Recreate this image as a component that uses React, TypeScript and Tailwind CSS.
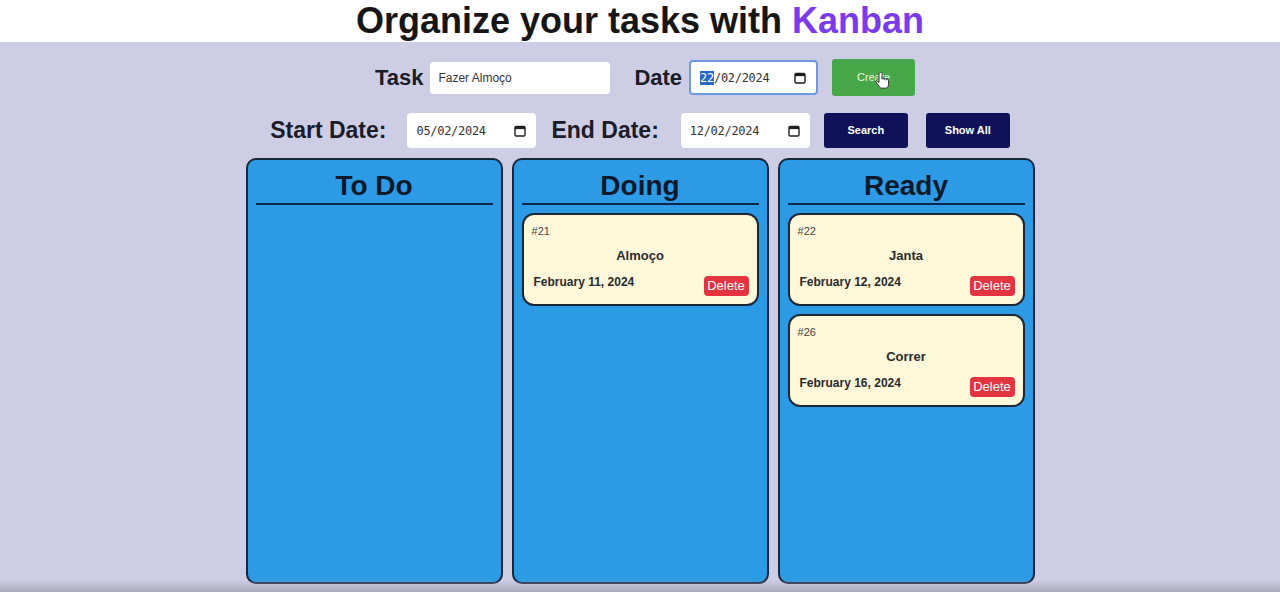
import React from "react";

type Task = { id: number; title: string; date: string };

const columns: { name: string; tasks: Task[] }[] = [
  { name: "To Do", tasks: [] },
  { name: "Doing", tasks: [{ id: 21, title: "Almoço", date: "February 11, 2024" }] },
  {
    name: "Ready",
    tasks: [
      { id: 22, title: "Janta", date: "February 12, 2024" },
      { id: 26, title: "Correr", date: "February 16, 2024" },
    ],
  },
];

function CalendarIcon() {
  return (
    <svg width="12" height="12" viewBox="0 0 12 12" className="shrink-0">
      <rect x="1" y="1.5" width="10" height="9.5" rx="1.2" fill="none" stroke="#1f1f1f" strokeWidth="1.4" />
      <rect x="1" y="1.5" width="10" height="2.6" fill="#1f1f1f" />
    </svg>
  );
}

// fake date input so the pt-BR format shows up like the screenshot
function DateField({ day, rest, focused }: { day: string; rest: string; focused?: boolean }) {
  return (
    <div
      className={
        "flex h-[35px] w-[129px] items-center justify-between rounded bg-white pl-[9px] pr-[10px] text-[12px] text-[#333] " +
        (focused ? "border-2 border-[#6d9be0]" : "")
      }
      style={{ fontFamily: '"DejaVu Sans Mono", "Liberation Mono", monospace' }}
    >
      <span className="tracking-[-0.3px]">
        {focused ? <span className="bg-[#2868c8] text-white">{day}</span> : day}
        {rest}
      </span>
      <CalendarIcon />
    </div>
  );
}

function Card({ task }: { task: Task }) {
  return (
    <div className="rounded-[12px] border-2 border-[#1c2733] bg-[#fdf8da] px-2 pt-[8px] pb-[8px]">
      <div className="text-[11px] leading-[16px] text-[#444]">#{task.id}</div>
      <div className="mt-[8px] text-center text-[13px] font-bold leading-[18px] text-[#2a2a2a]">{task.title}</div>
      <div className="mt-[11px] flex items-start justify-between">
        <span className="ml-[2px] -mt-[2px] text-[12px] font-bold leading-[16px] text-[#2a2a2a]">{task.date}</span>
        <button className="h-[20px] w-[45px] rounded-[4px] bg-[#e4343f] text-[13px] leading-[20px] text-white">
          Delete
        </button>
      </div>
    </div>
  );
}

export default function App() {
  return (
    <main
      className="relative h-[592px] overflow-hidden bg-[#cecde6]"
      style={{ fontFamily: '"Liberation Sans", Arial, sans-serif' }}
    >
      <header className="flex h-[42px] items-center justify-center bg-white">
        <h1 className="text-[36px] font-bold leading-none text-[#161616]">
          Organize your tasks with <span className="text-[#7c3aed]">Kanban</span>
        </h1>
      </header>

      {/* create form */}
      <div className="mt-[17px] flex h-[37px] items-center justify-center pl-[10px]">
        <label className="text-[22px] font-bold text-[#1b1b2a]">Task</label>
        <input
          defaultValue="Fazer Almoço"
          className="ml-[7px] h-[32px] w-[180px] rounded bg-white px-[8px] text-[12px] text-[#333] outline-none"
        />
        <label className="ml-[24px] text-[22px] font-bold text-[#1b1b2a]">Date</label>
        <div className="ml-[7px]">
          <DateField day="22" rest="/02/2024" focused />
        </div>
        <button className="relative ml-[14px] h-[37px] w-[83px] rounded-[3px] bg-[#47a84a] text-[11px] text-[#e6f5e6]">
          Create
          <svg width="16" height="18" viewBox="0 0 16 18" className="absolute left-[42px] top-[13px]">
            <path
              d="M5 1.5v9l-1.8-1.6c-.8-.6-1.8.3-1.2 1.1l3.4 4.8c.6.9 1.5 1.4 2.6 1.4h3.2c1.9 0 3.3-1.5 3.3-3.4V8.2c0-.7-.5-1.2-1.1-1.2s-1.1.5-1.1 1.2V7.6c0-.7-.5-1.2-1.1-1.2s-1.1.5-1.1 1.2v-.4c0-.7-.5-1.2-1.1-1.2S8 6.5 8 7.2V1.5C8 .8 7.5.3 6.9.3S5 .8 5 1.5z"
              fill="white"
              stroke="#222"
              strokeWidth="0.9"
            />
          </svg>
        </button>
      </div>

      {/* date filter */}
      <div className="mt-[17px] flex h-[35px] items-center justify-center">
        <label className="text-[23px] font-bold text-[#1b1b2a]">Start Date:</label>
        <div className="ml-[21px]">
          <DateField day="05" rest="/02/2024" />
        </div>
        <label className="ml-[15px] text-[23px] font-bold text-[#1b1b2a]">End Date:</label>
        <div className="ml-[22px]">
          <DateField day="12" rest="/02/2024" />
        </div>
        <button className="ml-[14px] h-[35px] w-[84px] rounded-[3px] bg-[#0f1258] text-[11px] font-bold text-white">
          Search
        </button>
        <button className="ml-[18px] h-[35px] w-[84px] rounded-[3px] bg-[#0f1258] text-[11px] font-bold text-white">
          Show All
        </button>
      </div>

      {/* board */}
      <div className="mt-[10px] flex justify-center gap-[9px]">
        {columns.map((col) => (
          <section
            key={col.name}
            className="flex h-[426px] w-[257px] flex-col rounded-[10px] border-2 border-[#17273a] bg-[#2d9ae6]"
          >
            <h2 className="mx-2 border-b-2 border-[#0e2a48] pt-[9px] text-center text-[28px] font-bold leading-[34px] text-[#0b1a2b]">
              {col.name}
            </h2>
            <div className="mx-2 mt-[8px] flex flex-col gap-[8px]">
              {col.tasks.map((t) => (
                <Card key={t.id} task={t} />
              ))}
            </div>
          </section>
        ))}
      </div>

      <div className="pointer-events-none absolute bottom-0 left-0 right-0 h-[12px] bg-gradient-to-b from-transparent to-[#a9a8bd]" />
    </main>
  );
}
